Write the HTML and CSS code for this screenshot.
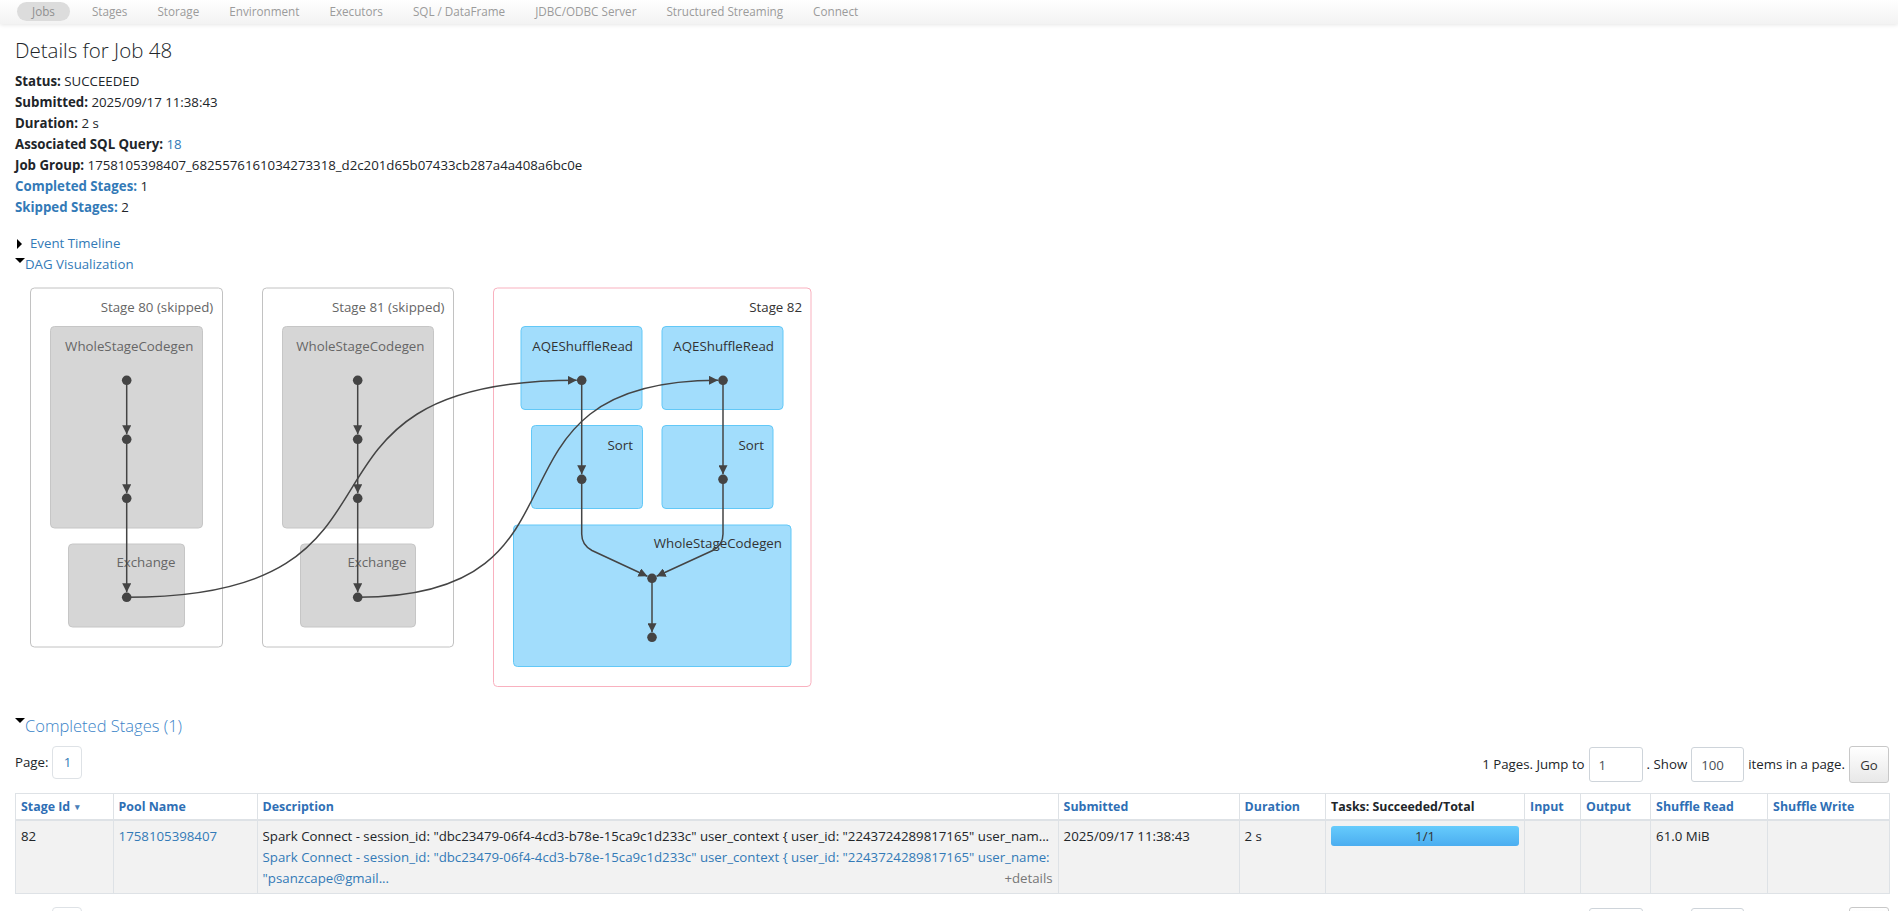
FILE: index.html
```html
<!DOCTYPE html>
<html lang="en">
<head>
<meta charset="utf-8">
<title>Spark Jobs - Details for Job 48</title>
<link rel="stylesheet" href="styles.css">
</head>
<body>
<nav class="topbar">
  <a class="nav-item active" href="#">Jobs</a>
  <a class="nav-item" href="#">Stages</a>
  <a class="nav-item" href="#">Storage</a>
  <a class="nav-item" href="#">Environment</a>
  <a class="nav-item" href="#">Executors</a>
  <a class="nav-item" href="#">SQL / DataFrame</a>
  <a class="nav-item" href="#">JDBC/ODBC Server</a>
  <a class="nav-item" href="#">Structured Streaming</a>
  <a class="nav-item" href="#">Connect</a>
</nav>

<main class="page">
  <h3 class="title">Details for Job 48</h3>
  <div class="summary">
    <div><strong>Status:</strong> SUCCEEDED</div>
    <div><strong>Submitted:</strong> 2025/09/17 11:38:43</div>
    <div><strong>Duration:</strong> 2 s</div>
    <div><strong>Associated SQL Query:</strong> <a href="#">18</a></div>
    <div><strong>Job Group:</strong> 1758105398407_6825576161034273318_d2c201d65b07433cb287a4a408a6bc0e</div>
    <div><a href="#"><strong>Completed Stages:</strong></a> 1</div>
    <div><a href="#"><strong>Skipped Stages:</strong></a> 2</div>
  </div>

  <div class="toggles">
    <div class="toggle"><span class="arrow-closed"></span><a href="#">Event Timeline</a></div>
    <div class="toggle"><span class="arrow-open"></span><a href="#">DAG Visualization</a></div>
  </div>

  <svg class="dag" viewBox="15 276 830 428" width="830" height="428" xmlns="http://www.w3.org/2000/svg">
    <defs>
      <marker id="arr" viewBox="0 0 10 10" refX="10" refY="5" markerWidth="9" markerHeight="9" markerUnits="userSpaceOnUse" orient="auto">
        <path d="M0,0 L10,5 L0,10 z" fill="#444"/>
      </marker>
    </defs>

    <rect class="stage skipped" x="30.5" y="289" width="192" height="359" rx="4"/>
    <text class="lbl muted" x="213.3" y="313">Stage 80 (skipped)</text>
    <rect class="cl skipped" x="50.5" y="327.5" width="152" height="201.5" rx="4"/>
    <text class="lbl muted" x="193.3" y="352">WholeStageCodegen</text>
    <rect class="cl skipped" x="68.5" y="545" width="116" height="83" rx="4"/>
    <text class="lbl muted" x="175.5" y="568">Exchange</text>

    <rect class="stage skipped" x="262.5" y="289" width="191" height="359" rx="4"/>
    <text class="lbl muted" x="444.5" y="313">Stage 81 (skipped)</text>
    <rect class="cl skipped" x="282.5" y="327.5" width="151" height="201.5" rx="4"/>
    <text class="lbl muted" x="424.5" y="352">WholeStageCodegen</text>
    <rect class="cl skipped" x="300.5" y="545" width="115" height="83" rx="4"/>
    <text class="lbl muted" x="406.5" y="568">Exchange</text>

    <rect class="stage active" x="493.5" y="289" width="317.5" height="398.5" rx="4"/>
    <text class="lbl" x="802" y="313">Stage 82</text>
    <rect class="cl run" x="521" y="327.5" width="121" height="83" rx="4"/>
    <text class="lbl" x="633" y="352">AQEShuffleRead</text>
    <rect class="cl run" x="662" y="327.5" width="121" height="83" rx="4"/>
    <text class="lbl" x="774" y="352">AQEShuffleRead</text>
    <rect class="cl run" x="531.5" y="426.5" width="111" height="83" rx="4"/>
    <text class="lbl" x="633" y="451">Sort</text>
    <rect class="cl run" x="662" y="426.5" width="111" height="83" rx="4"/>
    <text class="lbl" x="764" y="451">Sort</text>
    <rect class="cl run" x="513.5" y="526" width="277.5" height="141.5" rx="4"/>
    <text class="lbl" x="782" y="549">WholeStageCodegen</text>

    <g class="edges">
      <path d="M126.7,381.3 L126.7,435.3" marker-end="url(#arr)"/>
      <path d="M126.7,440.3 L126.7,494.3" marker-end="url(#arr)"/>
      <path d="M126.7,499.3 L126.7,593.3" marker-end="url(#arr)"/>
      <path d="M357.7,381.3 L357.7,435.3" marker-end="url(#arr)"/>
      <path d="M357.7,440.3 L357.7,494.3" marker-end="url(#arr)"/>
      <path d="M357.7,499.3 L357.7,593.3" marker-end="url(#arr)"/>
      <path d="M126.7,598.3 C443.5,598.3 259,381.3 576.7,381.3" marker-end="url(#arr)"/>
      <path d="M357.7,598.3 C611,598.3 463.7,381.3 718,381.3" marker-end="url(#arr)"/>
      <path d="M581.7,381.3 L581.7,475.3" marker-end="url(#arr)"/>
      <path d="M723,381.3 L723,475.3" marker-end="url(#arr)"/>
      <path d="M581.7,480.3 L581.7,535 Q581.7,546 592,551.5 L647.4,577.3" marker-end="url(#arr)"/>
      <path d="M723,480.3 L723,535 Q723,546 712.7,551.5 L656.6,577.3" marker-end="url(#arr)"/>
      <path d="M652,579.3 L652,633.3" marker-end="url(#arr)"/>
    </g>

    <g class="nodes">
      <circle cx="126.7" cy="381.3" r="4.8"/>
      <circle cx="126.7" cy="440.3" r="4.8"/>
      <circle cx="126.7" cy="499.3" r="4.8"/>
      <circle cx="126.7" cy="598.3" r="4.8"/>
      <circle cx="357.7" cy="381.3" r="4.8"/>
      <circle cx="357.7" cy="440.3" r="4.8"/>
      <circle cx="357.7" cy="499.3" r="4.8"/>
      <circle cx="357.7" cy="598.3" r="4.8"/>
      <circle cx="581.7" cy="381.3" r="4.8"/>
      <circle cx="723" cy="381.3" r="4.8"/>
      <circle cx="581.7" cy="480.3" r="4.8"/>
      <circle cx="723" cy="480.3" r="4.8"/>
      <circle cx="652" cy="579.3" r="4.8"/>
      <circle cx="652" cy="638.3" r="4.8"/>
    </g>
  </svg>

  <div class="section-head"><span class="arrow-open"></span><a href="#">Completed Stages (1)</a></div>

  <div class="pager">
    <div class="pager-left">
      <span>Page:</span>
      <span class="page-box">1</span>
    </div>
    <form class="pager-right">
      <span>1 Pages. Jump to</span>
      <input class="num jump" type="text" value="1">
      <span>. Show</span>
      <input class="num size" type="text" value="100">
      <span>items in a page.</span>
      <button class="go" type="button">Go</button>
    </form>
  </div>

  <table class="stages">
    <colgroup>
      <col class="w-id"><col class="w-pool"><col class="w-desc"><col class="w-sub"><col class="w-dur"><col class="w-tasks"><col class="w-in"><col class="w-out"><col class="w-sr"><col class="w-sw">
    </colgroup>
    <thead>
      <tr>
        <th><a href="#">Stage Id <span class="sort">&#x25BE;</span></a></th>
        <th><a href="#">Pool Name</a></th>
        <th><a href="#">Description</a></th>
        <th><a href="#">Submitted</a></th>
        <th><a href="#">Duration</a></th>
        <th class="plain">Tasks: Succeeded/Total</th>
        <th><a href="#">Input</a></th>
        <th><a href="#">Output</a></th>
        <th><a href="#">Shuffle Read</a></th>
        <th><a href="#">Shuffle Write</a></th>
      </tr>
    </thead>
    <tbody>
      <tr>
        <td>82</td>
        <td><a href="#">1758105398407</a></td>
        <td>
          <div class="desc-line">Spark Connect - session_id: "dbc23479-06f4-4cd3-b78e-15ca9c1d233c" user_context { user_id: "2243724289817165" user_nam...</div>
          <a href="#" class="desc-link">Spark Connect - session_id: "dbc23479-06f4-4cd3-b78e-15ca9c1d233c" user_context { user_id: "2243724289817165" user_name:<br>"psanzcape@gmail...</a>
          <span class="details">+details</span>
        </td>
        <td>2025/09/17 11:38:43</td>
        <td>2 s</td>
        <td><div class="progress">1/1</div></td>
        <td></td>
        <td></td>
        <td>61.0 MiB</td>
        <td></td>
      </tr>
    </tbody>
  </table>

  <div class="pager bottom">
    <div class="pager-left">
      <span>Page:</span>
      <span class="page-box">1</span>
    </div>
    <form class="pager-right">
      <span>1 Pages. Jump to</span>
      <input class="num jump" type="text" value="1">
      <span>. Show</span>
      <input class="num size" type="text" value="100">
      <span>items in a page.</span>
      <button class="go" type="button">Go</button>
    </form>
  </div>
</main>
</body>
</html>
```

FILE: styles.css
```css
* { box-sizing: border-box; }

body {
  margin: 0;
  font-family: "Open Sans", "Noto Sans", sans-serif;
  font-size: 13.25px;
  line-height: 21px;
  color: #212529;
  background: #fff;
}

a { color: #337ab7; text-decoration: none; }

.topbar {
  height: 24px;
  display: flex;
  align-items: flex-start;
  padding: 2px 0 0 17px;
  background: linear-gradient(#ffffff, #f3f3f3);
  box-shadow: 0 1px 4px rgba(0, 0, 0, 0.10);
}
.nav-item {
  font-size: 11.7px;
  line-height: 19px;
  color: #9b9b9b;
  padding: 0 15px;
  border-radius: 10px;
}
.nav-item.active {
  background: #dcdcdc;
  color: #909090;
  margin-right: 7px;
}

.page { padding: 0 9px 0 15px; }

.title {
  font-weight: 300;
  font-size: 20.5px;
  line-height: 25px;
  margin: 14px 0 8px;
  color: #212529;
}

.summary strong { font-weight: 700; }

.toggles { margin-top: 15px; }

.arrow-closed {
  display: inline-block;
  width: 0;
  height: 0;
  border-top: 5px solid transparent;
  border-bottom: 5px solid transparent;
  border-left: 5px solid #000;
  margin: 0 8px 0 2px;
  vertical-align: -1px;
}
.arrow-open {
  display: inline-block;
  width: 0;
  height: 0;
  border-left: 5px solid transparent;
  border-right: 5px solid transparent;
  border-top: 5px solid #000;
  vertical-align: 6px;
}

.dag {
  display: block;
  font-family: "Open Sans", "Noto Sans", sans-serif;
}
.dag .stage { fill: #fff; stroke-width: 1px; }
.dag .stage.skipped { stroke: #c2c2c2; }
.dag .stage.active { stroke: #f9b1bf; }
.dag .cl { stroke-width: 1px; }
.dag .cl.skipped { fill: #d6d6d6; stroke: #c6c6c6; }
.dag .cl.run { fill: #a2ddfc; stroke: #62c8f7; }
.dag .lbl {
  font-size: 13.3px;
  text-anchor: end;
  fill: #333;
}
.dag .lbl.muted { fill: #666; }
.dag .edges path { fill: none; stroke: #444; stroke-width: 1.5px; }
.dag .nodes circle { fill: #444; }

.section-head {
  margin-top: 11px;
  font-size: 16.5px;
  line-height: 24px;
  font-weight: 300;
}
.section-head .arrow-open { vertical-align: 9px; }
.section-head a { color: #3b84c8; }

.pager {
  display: flex;
  justify-content: space-between;
  align-items: flex-start;
  margin-top: 8px;
  height: 38px;
}
.pager.bottom { margin-top: 13px; }
.pager-left {
  display: flex;
  align-items: center;
  height: 33px;
  gap: 4px;
}
.page-box {
  display: inline-block;
  width: 30px;
  height: 33px;
  line-height: 31px;
  text-align: center;
  border: 1px solid #dee2e6;
  border-radius: 4px;
  color: #337ab7;
}
.pager-right {
  display: flex;
  align-items: center;
  margin: 0;
  gap: 4px;
  height: 37px;
}
.num {
  height: 35px;
  border: 1px solid #ced4da;
  border-radius: 3px;
  padding: 0 9px;
  font-family: inherit;
  font-size: 13.25px;
  color: #495057;
  background: #fff;
}
.num.jump { width: 54px; }
.num.size { width: 53px; }
.go {
  width: 40px;
  height: 37px;
  font-family: inherit;
  font-size: 13.25px;
  color: #333;
  border: 1px solid #c8c8c8;
  border-radius: 3px;
  background: linear-gradient(#ffffff, #e8e8e8);
  padding: 0;
}

.stages {
  width: 100%;
  table-layout: fixed;
  border-collapse: collapse;
  margin-top: 9px;
  border: 1px solid #dee2e6;
}
.w-id { width: 97.6px; }
.w-pool { width: 144px; }
.w-desc { width: 801px; }
.w-sub { width: 181px; }
.w-dur { width: 86.5px; }
.w-tasks { width: 199px; }
.w-in { width: 56px; }
.w-out { width: 70px; }
.w-sr { width: 117px; }
.w-sw { width: 122px; }

.stages th {
  text-align: left;
  font-size: 12.4px;
  font-weight: 700;
  line-height: 19px;
  padding: 3px 5px;
  border: 1px solid #dee2e6;
  border-bottom: 2px solid #dee2e6;
  background: #fff;
  white-space: nowrap;
}
.stages th a { color: #2f6fb5; }
.stages th.plain { color: #212529; }
.stages th .sort { font-size: 9px; color: #4a7fb8; margin-left: 2px; vertical-align: 1px; }

.stages td {
  vertical-align: top;
  padding: 5px 5px 4px;
  border: 1px solid #dee2e6;
  background: #f2f2f2;
}
.desc-line {
  white-space: nowrap;
  overflow: hidden;
  text-overflow: ellipsis;
}
.desc-link { white-space: nowrap; }
.details {
  float: right;
  color: #777;
}
.progress {
  height: 20px;
  line-height: 20px;
  border-radius: 3px;
  text-align: center;
  color: #333;
  background: linear-gradient(#66cbfc, #4badf0);
}
```
